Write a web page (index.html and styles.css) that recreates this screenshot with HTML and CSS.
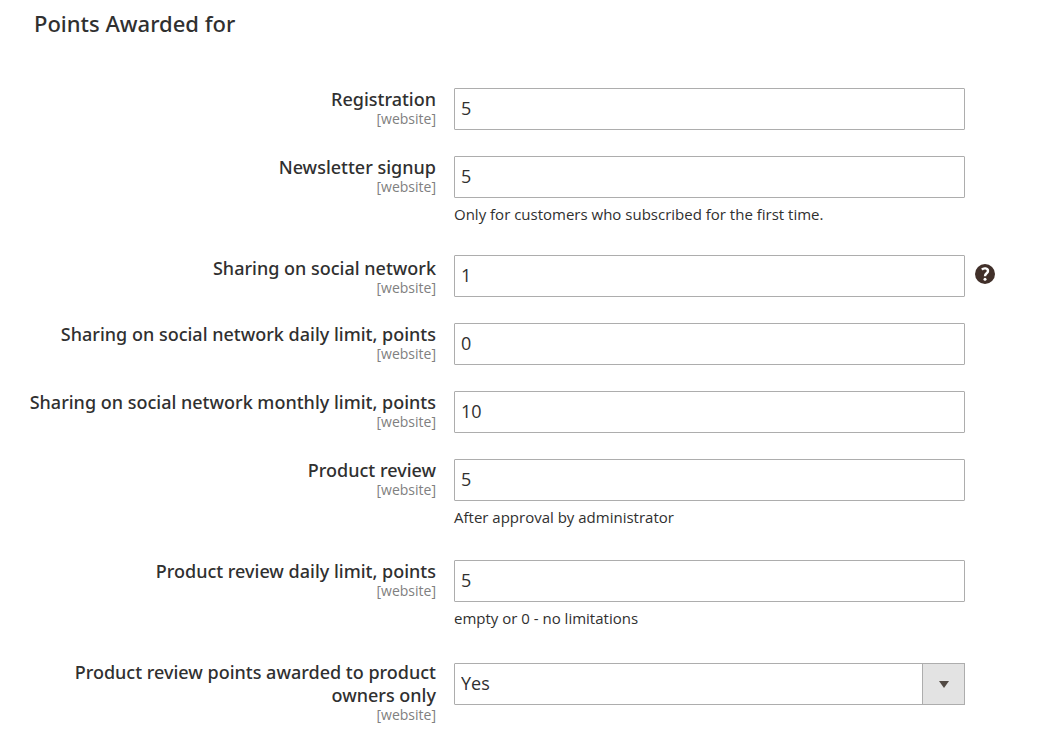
FILE: index.html
```html
<!DOCTYPE html>
<html lang="en">
<head>
  <meta charset="UTF-8">
  <meta name="viewport" content="width=device-width, initial-scale=1.0">
  <title>Points Awarded for</title>
  <link rel="stylesheet" href="styles.css">
</head>
<body>
  <form class="section">
    <h2 class="section-title">Points Awarded for</h2>

    <div class="field">
      <label class="label" for="registration">Registration <span class="scope">[website]</span></label>
      <div class="value">
        <input class="control" type="text" id="registration" value="5">
      </div>
    </div>

    <div class="field">
      <label class="label" for="newsletter">Newsletter signup <span class="scope">[website]</span></label>
      <div class="value">
        <input class="control" type="text" id="newsletter" value="5">
        <p class="note">Only for customers who subscribed for the first time.</p>
      </div>
    </div>

    <div class="field with-help">
      <label class="label" for="sharing">Sharing on social network <span class="scope">[website]</span></label>
      <div class="value">
        <input class="control" type="text" id="sharing" value="1">
      </div>
      <button class="help" type="button" aria-label="Help">
        <svg width="20" height="20" viewBox="0 0 20 20">
          <circle cx="10" cy="10" r="10" fill="#41302a"/>
          <path d="M6.9 5.6C8.6 3.7 13 3.9 13 7C13 9.4 10 9.2 10 12.2" fill="none" stroke="#fff" stroke-width="2.4"/>
          <circle cx="10" cy="15.3" r="1.5" fill="#fff"/>
        </svg>
      </button>
    </div>

    <div class="field">
      <label class="label" for="sharing-daily">Sharing on social network daily limit, points <span class="scope">[website]</span></label>
      <div class="value">
        <input class="control" type="text" id="sharing-daily" value="0">
      </div>
    </div>

    <div class="field">
      <label class="label" for="sharing-monthly">Sharing on social network monthly limit, points <span class="scope">[website]</span></label>
      <div class="value">
        <input class="control" type="text" id="sharing-monthly" value="10">
      </div>
    </div>

    <div class="field">
      <label class="label" for="review">Product review <span class="scope">[website]</span></label>
      <div class="value">
        <input class="control" type="text" id="review" value="5">
        <p class="note">After approval by administrator</p>
      </div>
    </div>

    <div class="field">
      <label class="label" for="review-daily">Product review daily limit, points <span class="scope">[website]</span></label>
      <div class="value">
        <input class="control" type="text" id="review-daily" value="5">
        <p class="note">empty or 0 - no limitations</p>
      </div>
    </div>

    <div class="field">
      <label class="label" for="owners">Product review points awarded to product owners only <span class="scope">[website]</span></label>
      <div class="value select-wrap">
        <select class="control" id="owners">
          <option selected>Yes</option>
          <option>No</option>
        </select>
        <span class="arrow">
          <svg width="10" height="7" viewBox="0 0 10 7"><path d="M0 0H10L5 7Z" fill="#514943"/></svg>
        </span>
      </div>
    </div>
  </form>
</body>
</html>
```
FILE: styles.css
```css
* {
  box-sizing: border-box;
}

body {
  margin: 0;
  background-color: #fff;
  color: #303030;
  font-family: 'Open Sans', sans-serif;
}

.section {
  padding: 7px 24px 0;
}

.section-title {
  margin: 0 0 49px;
  padding-left: 10px;
  font-family: 'Noto Sans', 'Open Sans', sans-serif;
  font-size: 22px;
  line-height: 32px;
  font-weight: 500;
}

.field {
  display: flex;
  align-items: flex-start;
  margin-bottom: 26px;
}

.label {
  flex: 0 0 412px;
  margin-right: 18px;
  font-family: 'Noto Sans', 'Open Sans', sans-serif;
  font-size: 18px;
  line-height: 23px;
  font-weight: 500;
  text-align: right;
}

.scope {
  display: block;
  color: #808080;
  font-family: 'Open Sans', sans-serif;
  font-size: 14px;
  line-height: 16px;
  font-weight: 400;
}

.value {
  flex: 0 1 511px;
}

.control {
  display: block;
  width: 100%;
  height: 42px;
  padding: 0 6px 2px;
  border: 1px solid #adadad;
  border-radius: 1px;
  background-color: #fff;
  color: #303030;
  font-family: inherit;
  font-size: 18px;
}

.note {
  margin: 5px 0 6px;
  font-size: 15px;
  line-height: 22px;
}

.with-help {
  margin-top: -2px;
}

.with-help .label {
  padding-top: 2px;
}

.help {
  display: block;
  margin: 9px 0 0 10px;
  padding: 0;
  border: 0;
  background: none;
  cursor: pointer;
}

.help svg {
  display: block;
}

.select-wrap {
  position: relative;
  margin-top: 2px;
}

.select-wrap .control {
  appearance: none;
}

.arrow {
  position: absolute;
  top: 0;
  right: 0;
  display: flex;
  align-items: center;
  justify-content: center;
  width: 43px;
  height: 42px;
  border: 1px solid #adadad;
  background-color: #e3e3e3;
  pointer-events: none;
}
```
